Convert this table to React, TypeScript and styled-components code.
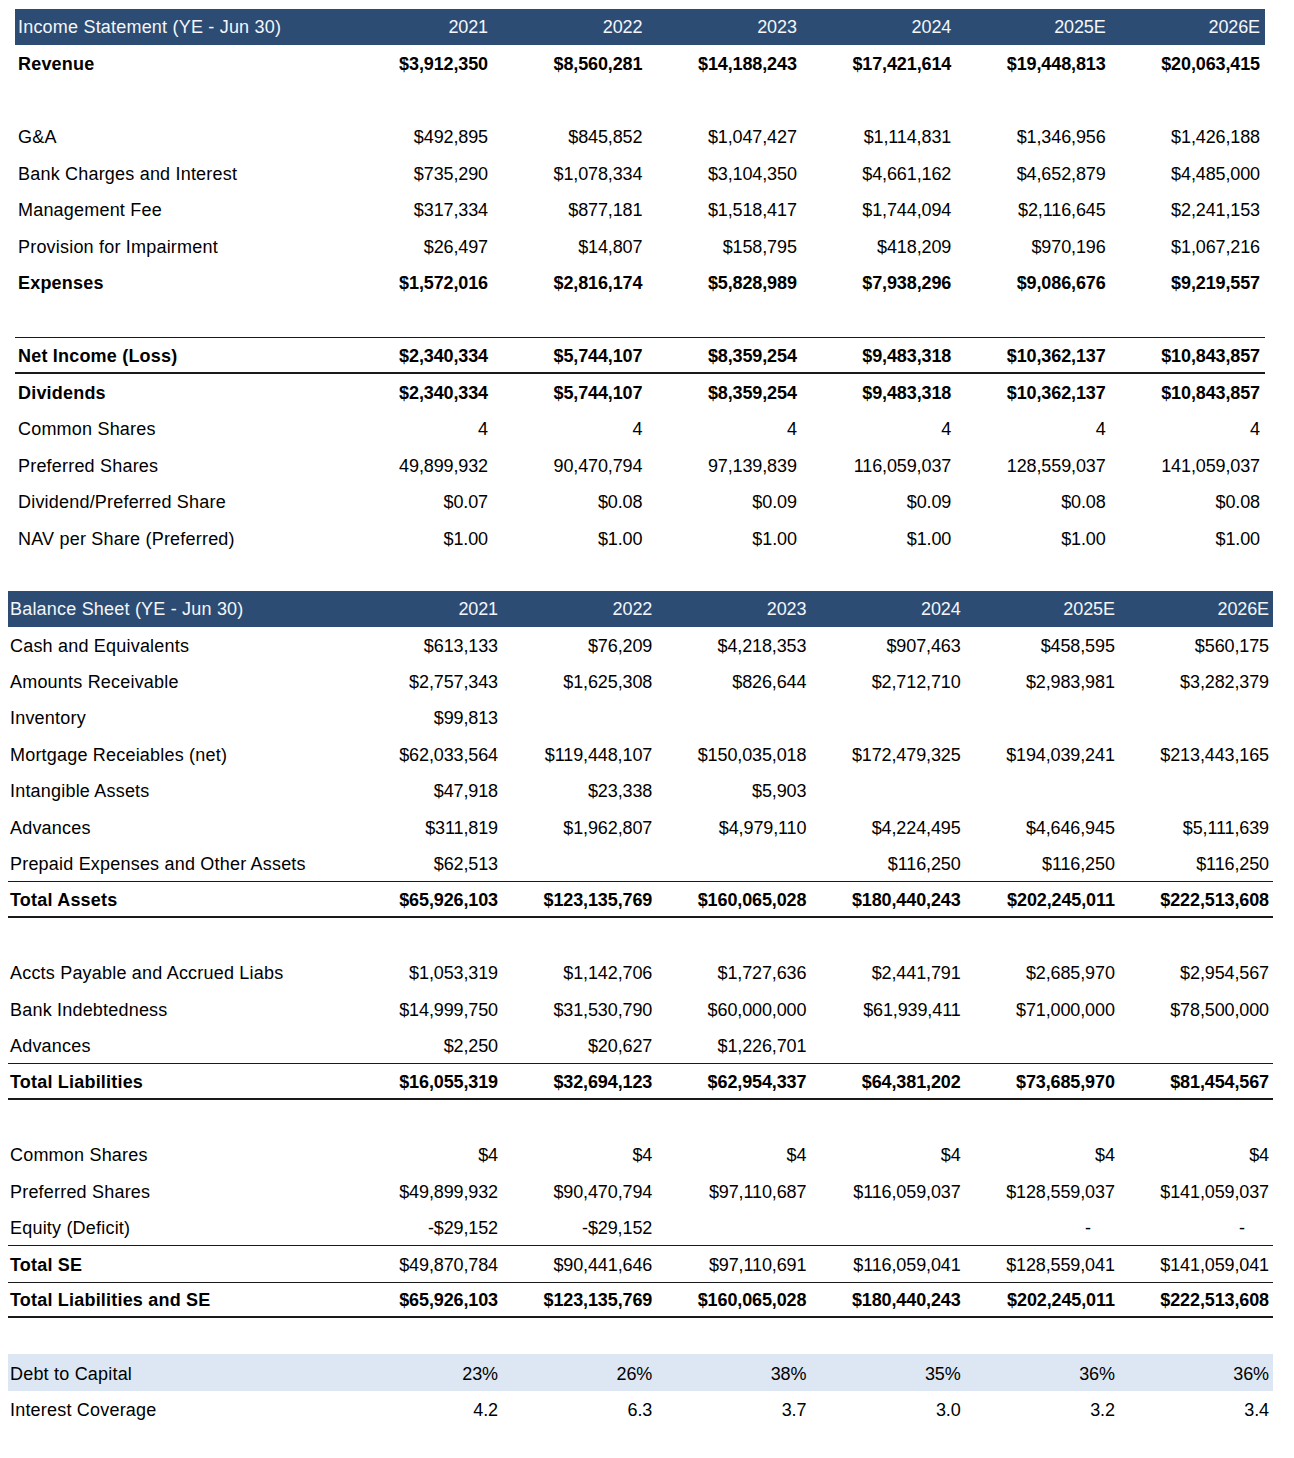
import React from "react";
import styled, { createGlobalStyle, css } from "styled-components";

const Global = createGlobalStyle`
  html, body { margin: 0; padding: 0; background: #fff; }
  body { font-family: "Liberation Sans", Arial, sans-serif; color: #000; }
`;

const Page = styled.div`
  width: 1294px;
  height: 1458px;
  padding-top: 9px;
  box-sizing: border-box;
  display: flex;
  flex-direction: column;
  gap: 34.5px;
`;

const Table = styled.div<{ $left: number; $width: number }>`
  margin-left: ${(p) => p.$left}px;
  width: ${(p) => p.$width}px;
  display: flex;
  flex-direction: column;
`;

type RowKind = "normal" | "bold" | "header" | "shade";

const Row = styled.div<{
  $label: number;
  $kind: RowKind;
  $top?: boolean;
  $bottom?: boolean;
  $h: number;
}>`
  display: grid;
  grid-template-columns: ${(p) => p.$label}px repeat(6, 1fr);
  height: ${(p) => p.$h}px;
  box-sizing: border-box;
  padding-top: 3px;
  align-items: center;
  font-size: 18px;
  white-space: nowrap;
  ${(p) => p.$top && css`border-top: 1.5px solid #1a1a1a;`}
  ${(p) => p.$bottom && css`border-bottom: 2px solid #1a1a1a;`}
  ${(p) =>
    p.$kind === "header" &&
    css`
      padding-top: 1px;
      background: #2c4c74;
      color: #f4f6fa;
    `}
  ${(p) =>
    p.$kind === "shade" &&
    css`
      background: #dde7f4;
    `}
`;

const Label = styled.div<{ $bold?: boolean; $pad: number }>`
  padding-left: ${(p) => p.$pad}px;
  letter-spacing: 0.2px;
  font-weight: ${(p) => (p.$bold ? 700 : 400)};
`;

const Value = styled.div<{ $bold?: boolean; $pad: number; $dash?: boolean }>`
  text-align: right;
  letter-spacing: -0.12px;
  padding-right: ${(p) => (p.$dash ? p.$pad + 24 : p.$pad)}px;
  font-weight: ${(p) => (p.$bold ? 700 : 400)};
`;

type Line = {
  label?: string;
  values?: string[];
  bold?: boolean;
  valuesBold?: boolean;
  top?: boolean;
  bottom?: boolean;
  shade?: boolean;
};

const years = ["2021", "2022", "2023", "2024", "2025E", "2026E"];

const income: Line[] = [
  { label: "Revenue", bold: true, values: ["$3,912,350", "$8,560,281", "$14,188,243", "$17,421,614", "$19,448,813", "$20,063,415"] },
  {},
  { label: "G&A", values: ["$492,895", "$845,852", "$1,047,427", "$1,114,831", "$1,346,956", "$1,426,188"] },
  { label: "Bank Charges and Interest", values: ["$735,290", "$1,078,334", "$3,104,350", "$4,661,162", "$4,652,879", "$4,485,000"] },
  { label: "Management Fee", values: ["$317,334", "$877,181", "$1,518,417", "$1,744,094", "$2,116,645", "$2,241,153"] },
  { label: "Provision for Impairment", values: ["$26,497", "$14,807", "$158,795", "$418,209", "$970,196", "$1,067,216"] },
  { label: "Expenses", bold: true, values: ["$1,572,016", "$2,816,174", "$5,828,989", "$7,938,296", "$9,086,676", "$9,219,557"] },
  {},
  { label: "Net Income (Loss)", bold: true, top: true, bottom: true, values: ["$2,340,334", "$5,744,107", "$8,359,254", "$9,483,318", "$10,362,137", "$10,843,857"] },
  { label: "Dividends", bold: true, values: ["$2,340,334", "$5,744,107", "$8,359,254", "$9,483,318", "$10,362,137", "$10,843,857"] },
  { label: "Common Shares", values: ["4", "4", "4", "4", "4", "4"] },
  { label: "Preferred Shares", values: ["49,899,932", "90,470,794", "97,139,839", "116,059,037", "128,559,037", "141,059,037"] },
  { label: "Dividend/Preferred Share", values: ["$0.07", "$0.08", "$0.09", "$0.09", "$0.08", "$0.08"] },
  { label: "NAV per Share (Preferred)", values: ["$1.00", "$1.00", "$1.00", "$1.00", "$1.00", "$1.00"] },
];

const balance: Line[] = [
  { label: "Cash and Equivalents", values: ["$613,133", "$76,209", "$4,218,353", "$907,463", "$458,595", "$560,175"] },
  { label: "Amounts Receivable", values: ["$2,757,343", "$1,625,308", "$826,644", "$2,712,710", "$2,983,981", "$3,282,379"] },
  { label: "Inventory", values: ["$99,813", "", "", "", "", ""] },
  { label: "Mortgage Receiables (net)", values: ["$62,033,564", "$119,448,107", "$150,035,018", "$172,479,325", "$194,039,241", "$213,443,165"] },
  { label: "Intangible Assets", values: ["$47,918", "$23,338", "$5,903", "", "", ""] },
  { label: "Advances", values: ["$311,819", "$1,962,807", "$4,979,110", "$4,224,495", "$4,646,945", "$5,111,639"] },
  { label: "Prepaid Expenses and Other Assets", values: ["$62,513", "", "", "$116,250", "$116,250", "$116,250"] },
  { label: "Total Assets", bold: true, top: true, bottom: true, values: ["$65,926,103", "$123,135,769", "$160,065,028", "$180,440,243", "$202,245,011", "$222,513,608"] },
  {},
  { label: "Accts Payable and Accrued Liabs", values: ["$1,053,319", "$1,142,706", "$1,727,636", "$2,441,791", "$2,685,970", "$2,954,567"] },
  { label: "Bank Indebtedness", values: ["$14,999,750", "$31,530,790", "$60,000,000", "$61,939,411", "$71,000,000", "$78,500,000"] },
  { label: "Advances", values: ["$2,250", "$20,627", "$1,226,701", "", "", ""] },
  { label: "Total Liabilities", bold: true, top: true, bottom: true, values: ["$16,055,319", "$32,694,123", "$62,954,337", "$64,381,202", "$73,685,970", "$81,454,567"] },
  {},
  { label: "Common Shares", values: ["$4", "$4", "$4", "$4", "$4", "$4"] },
  { label: "Preferred Shares", values: ["$49,899,932", "$90,470,794", "$97,110,687", "$116,059,037", "$128,559,037", "$141,059,037"] },
  { label: "Equity (Deficit)", values: ["-$29,152", "-$29,152", "", "", "-", "-"] },
  { label: "Total SE", bold: true, valuesBold: false, top: true, values: ["$49,870,784", "$90,441,646", "$97,110,691", "$116,059,041", "$128,559,041", "$141,059,041"] },
  { label: "Total Liabilities and SE", bold: true, top: true, bottom: true, values: ["$65,926,103", "$123,135,769", "$160,065,028", "$180,440,243", "$202,245,011", "$222,513,608"] },
  {},
  { label: "Debt to Capital", shade: true, values: ["23%", "26%", "38%", "35%", "36%", "36%"] },
  { label: "Interest Coverage", values: ["4.2", "6.3", "3.7", "3.0", "3.2", "3.4"] },
];

type Cfg = {
  title: string;
  left: number;
  width: number;
  label: number;
  labelPad: number;
  valuePad: number;
  rowH: number;
  lines: Line[];
};

function FinTable({ title, left, width, label, labelPad, valuePad, rowH, lines }: Cfg) {
  return (
    <Table $left={left} $width={width}>
      <Row $label={label} $kind="header" $h={36}>
        <Label $pad={labelPad}>{title}</Label>
        {years.map((y) => (
          <Value key={y} $pad={valuePad}>
            {y}
          </Value>
        ))}
      </Row>
      {lines.map((l, i) => {
        const vb = l.valuesBold ?? l.bold;
        return (
          <Row
            key={i}
            $label={label}
            $kind={l.shade ? "shade" : l.bold ? "bold" : "normal"}
            $top={l.top}
            $bottom={l.bottom}
            $h={rowH}
          >
            <Label $pad={labelPad} $bold={l.bold}>
              {l.label ?? ""}
            </Label>
            {(l.values ?? ["", "", "", "", "", ""]).map((v, j) => (
              <Value key={j} $pad={valuePad} $bold={vb} $dash={v === "-"}>
                {v}
              </Value>
            ))}
          </Row>
        );
      })}
    </Table>
  );
}

export default function App() {
  return (
    <>
      <Global />
      <Page>
        <FinTable
          title="Income Statement (YE - Jun 30)"
          left={15}
          width={1250}
          label={323.6}
          labelPad={3}
          valuePad={5}
          rowH={36.5}
          lines={income}
        />
        <FinTable
          title="Balance Sheet (YE - Jun 30)"
          left={8}
          width={1265}
          label={339.8}
          labelPad={2}
          valuePad={4}
          rowH={36.4}
          lines={balance}
        />
      </Page>
    </>
  );
}
